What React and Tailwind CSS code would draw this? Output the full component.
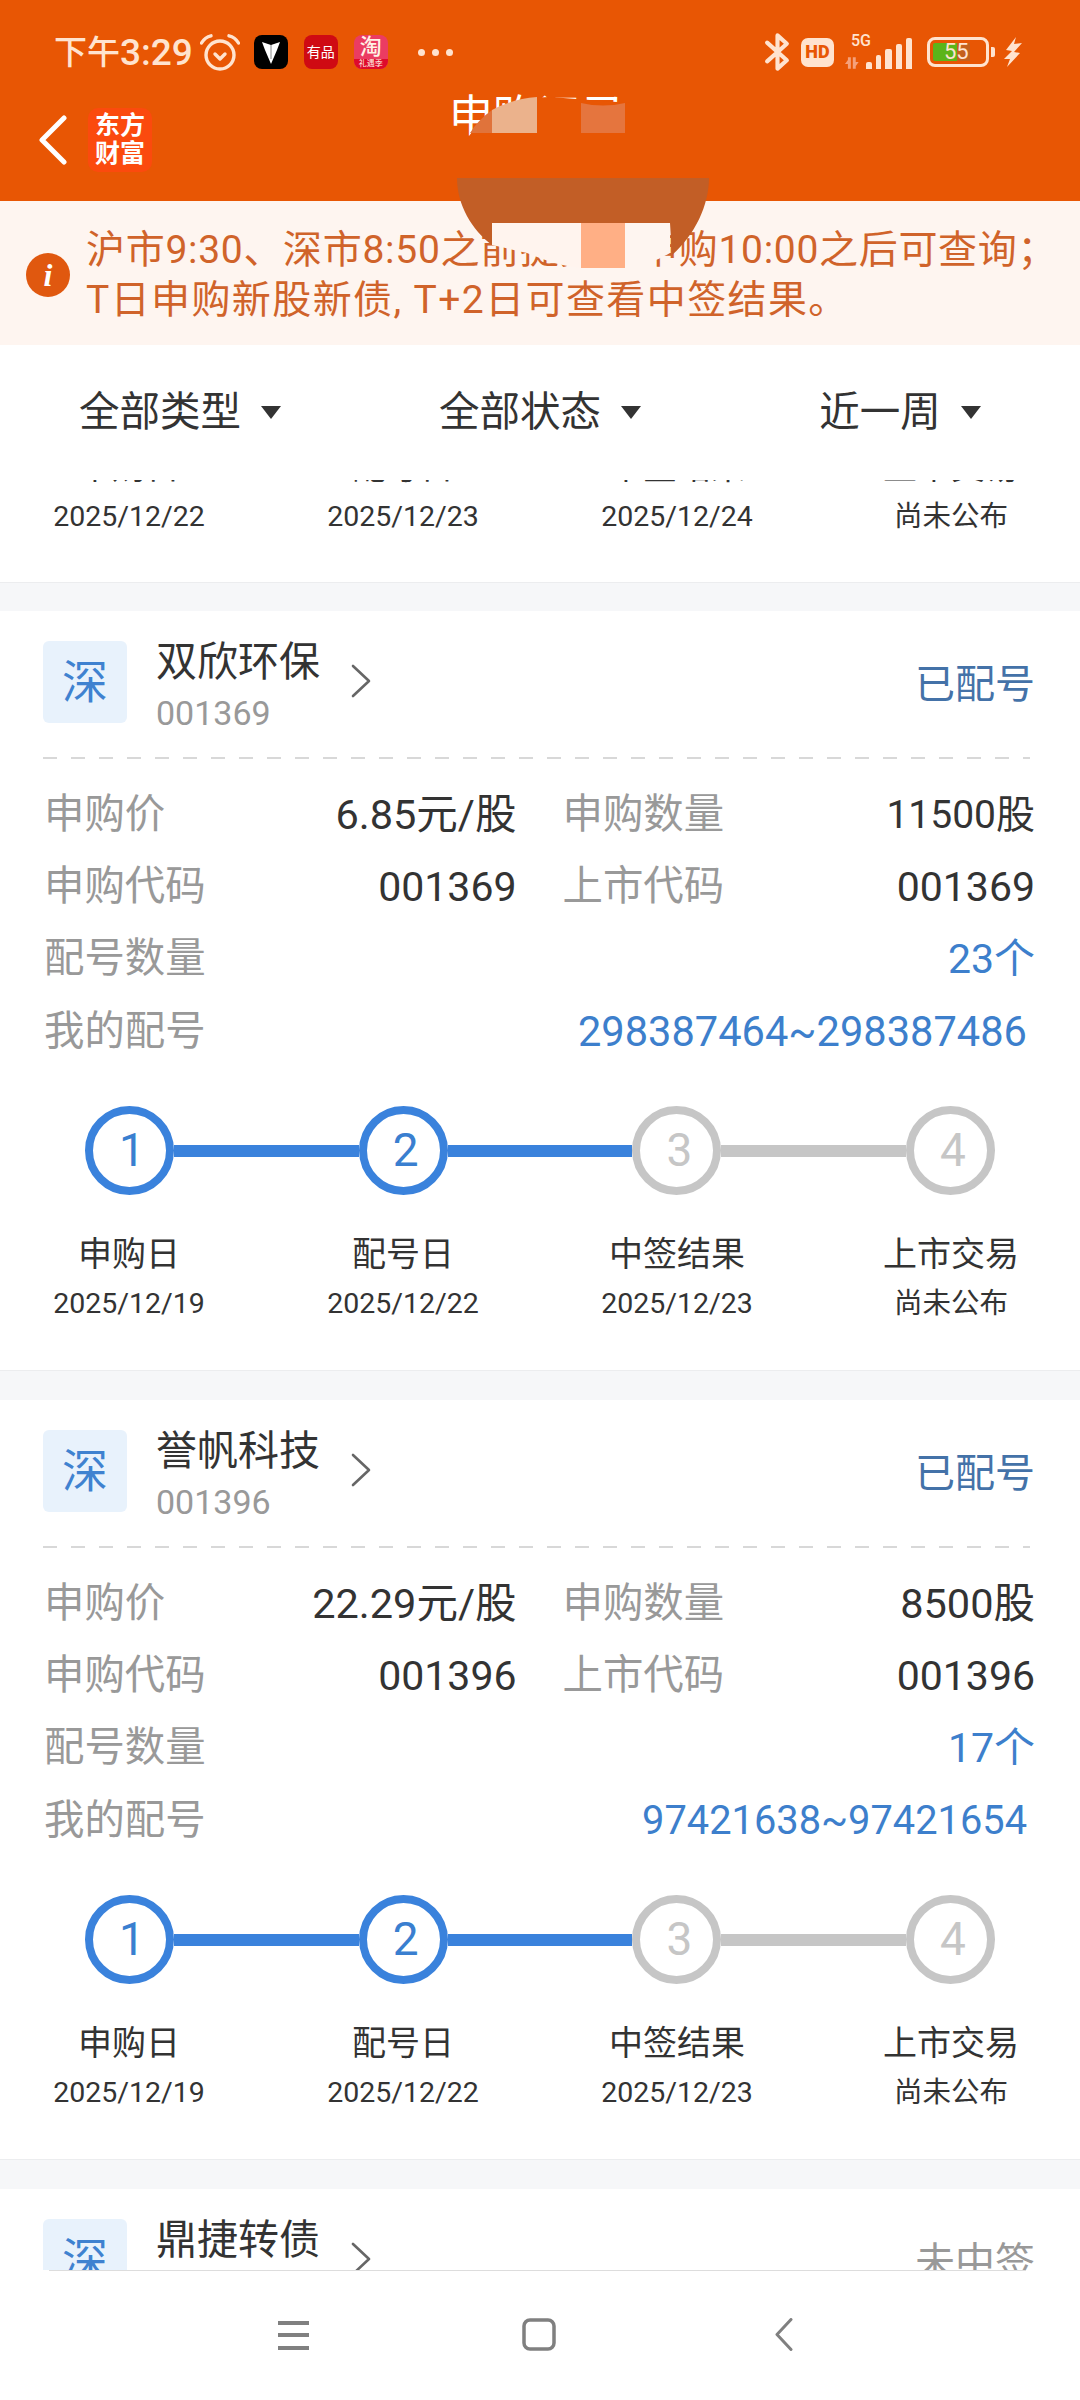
import React from "react";

const STEPS = ["申购日", "配号日", "中签结果", "上市交易"];

const CARDS = [
  {
    name: "双欣环保",
    code: "001369",
    price: "6.85元/股",
    amount: "11500股",
    amountSize: "text-[39px]",
    count: "23个",
    range: "298387464~298387486",
    rangeSize: "text-[41.6px]",
    dates: ["2025/12/19", "2025/12/22", "2025/12/23", "尚未公布"],
  },
  {
    name: "誉帆科技",
    code: "001396",
    price: "22.29元/股",
    amount: "8500股",
    amountSize: "text-[41.5px]",
    count: "17个",
    range: "97421638~97421654",
    rangeSize: "text-[39.8px]",
    dates: ["2025/12/19", "2025/12/22", "2025/12/23", "尚未公布"],
  },
];

const StepLabels = ({ dates }) => (
  <div className="flex justify-between px-[29px]">
    {STEPS.map((label, i) => (
      <div key={label} className="w-[200px] flex flex-col items-center text-[#333]">
        <div className="h-[50px] leading-[48px] text-[34px]">{label}</div>
        <div className="h-[48px] leading-[48px] text-[28.5px]">{dates[i]}</div>
      </div>
    ))}
  </div>
);

const Circle = ({ n, on }) => (
  <div
    className={`w-[89px] h-[89px] shrink-0 rounded-full border-[8px] bg-white flex items-center justify-center pl-[5px] text-[46px] ${
      on ? "border-[#3A82DC] text-[#3A7FD0]" : "border-[#C6C6C6] text-[#C6C6C6]"
    }`}
  >
    {n}
  </div>
);

const Stepper = () => (
  <div className="flex items-center pl-[85px] pr-[85px]">
    <Circle n={1} on />
    <div className="flex-1 h-[12px] bg-[#3A82DC]" />
    <Circle n={2} on />
    <div className="flex-1 h-[12px] bg-[#3A82DC]" />
    <Circle n={3} />
    <div className="flex-1 h-[12px] bg-[#C6C6C6]" />
    <Circle n={4} />
  </div>
);

const Chevron = () => (
  <svg width="20" height="34" viewBox="0 0 20 34" fill="none" className="shrink-0">
    <path d="M2 2 L18 17 L2 32" stroke="#666" strokeWidth="2.6" strokeLinecap="round" strokeLinejoin="round" />
  </svg>
);

const CardHead = ({ name, code, status, statusColor }) => (
  <div className="flex items-start pl-[43px] pr-[45px] pt-[30px]">
    <div className="w-[84px] h-[82px] rounded-[6px] bg-[#E8F2FC] text-[#3F82D0] text-[46px] flex items-center justify-center shrink-0">
      深
    </div>
    <div className="ml-[29px] w-[195px] shrink-0">
      <div className="h-[42px] leading-[42px] text-[41px] text-[#333]">{name}</div>
      <div className="h-[34px] leading-[34px] text-[34px] text-[#999] mt-[13px]">{code}</div>
    </div>
    <div className="mt-[23px]">
      <Chevron />
    </div>
    <div className={`ml-auto mt-[22px] leading-[44px] text-[40px] ${statusColor}`}>{status}</div>
  </div>
);

const Row = ({ label, value, color = "text-[#333]", size = "text-[41px]" }) => (
  <div className="h-[72.3px] flex items-center justify-between">
    <span className="text-[40.4px] text-[#999]">{label}</span>
    <span className={`${size} ${color}`}>{value}</span>
  </div>
);

const Card = ({ card }) => (
  <div className="bg-white h-[760px] border-b border-[#ECEDEF] mb-[29px]">
    <CardHead name={card.name} code={card.code} status="已配号" statusColor="text-[#4472A8]" />
    <div className="mt-[27px] ml-[43px] mr-[50px] h-[2px] bg-[repeating-linear-gradient(90deg,#D8D8D8_0,#D8D8D8_14px,transparent_14px,transparent_28px)]" />
    <div className="pl-[44px] pr-[45px] pt-[20px]">
      <div className="grid grid-cols-2 gap-x-[46px]">
        <Row label="申购价" value={card.price} size="text-[41.5px]" />
        <Row label="申购数量" value={card.amount} size={card.amountSize} />
        <Row label="申购代码" value={card.code} />
        <Row label="上市代码" value={card.code} />
      </div>
      <Row label="配号数量" value={card.count} color="text-[#3D7FCC]" />
      <div className="h-[72.3px] flex items-center justify-between pr-[8px]">
        <span className="text-[40.4px] text-[#999]">我的配号</span>
        <span className={`${card.rangeSize} text-[#3D7FCC]`}>{card.range}</span>
      </div>
    </div>
    <div className="mt-[38px]">
      <Stepper />
    </div>
    <div className="mt-[35px]">
      <StepLabels dates={card.dates} />
    </div>
  </div>
);

const Filter = ({ label }) => (
  <div className="flex items-center justify-center gap-[20px]">
    <span className="text-[40.5px] text-[#333]">{label}</span>
    <span className="w-0 h-0 border-l-[10px] border-r-[10px] border-t-[13px] border-l-transparent border-r-transparent border-t-[#333]" />
  </div>
);

const Alarm = () => (
  <svg width="40" height="37" viewBox="0 0 40 37" fill="none" stroke="#FFE3CF" strokeWidth="3.4" strokeLinecap="round" strokeLinejoin="round">
    <circle cx="20" cy="21" r="14" />
    <path d="M1.5 9 Q5 3 11 1.8" />
    <path d="M38.5 9 Q35 3 29 1.8" />
    <path d="M15 20 L20 25 L25 20" />
  </svg>
);

const Battery = () => (
  <div className="flex items-center gap-[2px]">
    <div className="relative w-[62px] h-[30px] rounded-[8px] border-[3.5px] border-[#FFE3CF] flex items-center">
      <div className="absolute left-[3px] top-[3px] bottom-[3px] w-[24px] bg-[#5CB41A] rounded-l-[2px]" />
      <div className="absolute left-[27px] top-[3px] bottom-[3px] w-[13px] bg-[#C4601C]" />
      <span className="relative ml-[14px] text-[22px] leading-none text-[#FFE3CF]">55</span>
    </div>
    <div className="w-[4px] h-[10px] bg-[#FFE3CF] rounded-r-[2px]" />
  </div>
);

const StatusBar = () => (
  <div className="h-[96px] pt-[8px] pl-[54px] pr-[58px] flex items-center text-[#FFE3CF]">
    <span className="text-[33px] font-medium leading-none">下午</span>
    <span className="text-[37px] font-medium leading-none">3:29</span>
    <div className="ml-[7px]">
      <Alarm />
    </div>
    <div className="ml-[14px] w-[34px] h-[34px] rounded-[8px] bg-black flex items-center justify-center">
      <svg width="18" height="24" viewBox="0 0 18 24">
        <path d="M0 2 L9 5 L18 2 L15 10 L9 24 L3 10 Z" fill="#fff" />
        <path d="M9 5 L9 19" stroke="#888" strokeWidth="1" />
      </svg>
    </div>
    <div className="ml-[16px] w-[34px] h-[34px] rounded-[8px] bg-[#CF0A13] text-white text-[14px] leading-none flex items-center justify-center">
      有品
    </div>
    <div className="ml-[16px] w-[34px] h-[34px] rounded-[8px] overflow-hidden bg-[#EB3C62] text-[#FFF2E6] flex flex-col items-center">
      <span className="text-[22px] leading-[24px] font-medium">淘</span>
      <span className="w-full h-[10px] bg-[#DE0A2C] text-[8px] leading-[10px] text-center">礼遇季</span>
    </div>
    <div className="ml-[30px] flex gap-[7px]">
      <span className="w-[7px] h-[7px] rounded-full bg-[#FFE3CF]" />
      <span className="w-[7px] h-[7px] rounded-full bg-[#FFE3CF]" />
      <span className="w-[7px] h-[7px] rounded-full bg-[#FFE3CF]" />
    </div>
    <svg width="27" height="42" viewBox="0 0 26 38" fill="none" stroke="#FFE3CF" strokeWidth="4" strokeLinecap="round" strokeLinejoin="round" className="ml-auto">
      <path d="M3 10 L22 27 L13 35 L13 3 L22 11 L3 28" />
    </svg>
    <div className="ml-[10px] w-[33px] h-[29px] rounded-[7px] bg-[#FFE3CF] text-[#E85604] text-[18px] font-black leading-none flex items-center justify-center">
      HD
    </div>
    <div className="ml-[10px] w-[68px] h-[34px] flex flex-col">
      <span className="ml-[7px] text-[16px] leading-[12px] font-medium">5G</span>
      <div className="flex items-end gap-[4px] h-[31px] -mt-[9px] justify-end">
        <svg width="16" height="12" viewBox="0 0 16 12" className="mr-[2px]">
          <path d="M1 7 L4 3 L4 0 L7 0 L7 12 L4 12 L4 7 Z M9 0 L12 0 L12 5 L15 5 L12 9 L12 12 L9 12 Z" fill="#F5A07A" />
        </svg>
        <span className="w-[6px] h-[7px] rounded-t-[2px] bg-[#FFE3CF]" />
        <span className="w-[6px] h-[14px] rounded-t-[2px] bg-[#FFE3CF]" />
        <span className="w-[7px] h-[20px] rounded-t-[2px] bg-[#FFE3CF]" />
        <span className="w-[6px] h-[25px] rounded-t-[2px] bg-[#FFE3CF]" />
        <span className="w-[6px] h-[31px] rounded-t-[2px] bg-[#FFE3CF]" />
      </div>
    </div>
    <div className="ml-[15px]">
      <Battery />
    </div>
    <svg width="18" height="30" viewBox="0 0 18 30" className="ml-[9px]">
      <path d="M12 0 L2 13 L8 14 L0 22 L6 22 L3 30 L16 16 L10 15 L18 6 L10 7 Z" fill="#FFE3CF" />
    </svg>
  </div>
);

const Header = () => (
  <div className="h-[201px] bg-[#E85604]">
    <StatusBar />
    <div className="grid grid-cols-[1fr_auto_1fr]">
      <div className="flex items-center pl-[39px] mt-[12px]">
        <svg width="28" height="50" viewBox="0 0 28 50" fill="none">
          <path d="M25 3 L3 25 L25 47" stroke="#fff" strokeWidth="5" strokeLinecap="round" strokeLinejoin="round" />
        </svg>
        <div className="ml-[21px] w-[64px] h-[64px] rounded-[10px] bg-[#FB4A0E] text-white text-[25px] font-bold leading-[28px] flex items-center justify-center text-center">
          东方
          <br />
          财富
        </div>
      </div>
      <div className="text-[44px] leading-[42px] text-white -ml-[6px]">申购记录</div>
      <div />
    </div>
  </div>
);

const Notice = () => (
  <div className="h-[144px] bg-[#FEF5F0] flex items-center pl-[26px] pt-[4px]">
    <div className="w-[44px] h-[44px] rounded-full bg-[#E0580F] text-white text-[32px] font-bold italic font-['Liberation_Serif',serif] flex items-center justify-center shrink-0">
      i
    </div>
    <div className="ml-[16px] text-[39px] leading-[50px] text-[#D0632A] whitespace-nowrap">
      <div className="tracking-[0.7px]">沪市9:30、深市8:50之前提交的申购10:00之后可查询；</div>
      <div className="tracking-[1.4px]">T日申购新股新债, T+2日可查看中签结果。</div>
    </div>
  </div>
);

// redaction marks painted over the title and the notice in the picture
const Redaction = () => (
  <svg width="1080" height="300" viewBox="0 0 1080 300" className="absolute left-0 top-0 pointer-events-none">
    <path d="M467 139 Q495 97 550 97 Q590 100 630 103 L630 137 L492 137 Q478 133 467 139 Z" fill="#E85604" />
    <path d="M470 133 Q478 120 492 110 L492 133 Z" fill="#E0733B" />
    <path d="M492 133 L492 110 Q512 99 537 97 L537 133 Z" fill="#EBB28C" />
    <path d="M581 133 L581 103 Q603 108 625 103 L625 133 Z" fill="#E5753E" />
    <path d="M457 178 L709 178 C709 205 695 235 672 255 L670 223 L492 223 L492 245 C472 230 457 205 457 178 Z" fill="#C25E26" />
    <path d="M492 223 L581 223 L581 268 Q557 266 527 253 L492 245 Z" fill="#FFF4EE" />
    <rect x="581" y="223" width="44" height="45" fill="#FFAF85" />
    <path d="M625 223 L670 223 L670 253 Q650 265 625 268 Z" fill="#FEF5F0" />
  </svg>
);

const App = () => (
  <div className="relative w-[1080px] h-[2400px] overflow-hidden flex flex-col bg-[#F6F7F9] font-['Roboto','Noto_Sans_CJK_SC',sans-serif]">
    <Header />
    <Notice />
    <div className="h-[135px] shrink-0 bg-white grid grid-cols-3 items-center">
      <Filter label="全部类型" />
      <Filter label="全部状态" />
      <Filter label="近一周" />
    </div>
    <div className="flex-1 overflow-hidden">
      <div className="h-[103px] mb-[28px] bg-white border-b border-[#ECEDEF] overflow-hidden">
        <div className="-mt-[37px]">
          <StepLabels dates={["2025/12/22", "2025/12/23", "2025/12/24", "尚未公布"]} />
        </div>
      </div>
      {CARDS.map((card) => (
        <Card key={card.code} card={card} />
      ))}
      <div className="bg-white">
        <CardHead name="鼎捷转债" code="" status="未中签" statusColor="text-[#999]" />
      </div>
    </div>
    <div className="h-[130px] shrink-0 bg-white">
      <div className="h-px ml-[49px] mr-[54px] bg-[#DDD]" />
      <div className="w-[735px] ml-[171px] mt-[47px] grid grid-cols-3 justify-items-center">
        <svg width="31" height="33" viewBox="0 0 31 33">
          <rect y="3" width="31" height="4" fill="#808080" />
          <rect y="15" width="31" height="4" fill="#808080" />
          <rect y="28" width="31" height="4" fill="#808080" />
        </svg>
        <svg width="34" height="33" viewBox="0 0 34 33" fill="none">
          <rect x="2" y="2" width="30" height="29" rx="6" stroke="#808080" strokeWidth="3.5" />
        </svg>
        <svg width="18" height="33" viewBox="0 0 18 33" fill="none">
          <path d="M16 1.5 L2 16.5 L16 31.5" stroke="#808080" strokeWidth="3" strokeLinecap="round" strokeLinejoin="round" />
        </svg>
      </div>
    </div>
    <Redaction />
  </div>
);

export default App;
